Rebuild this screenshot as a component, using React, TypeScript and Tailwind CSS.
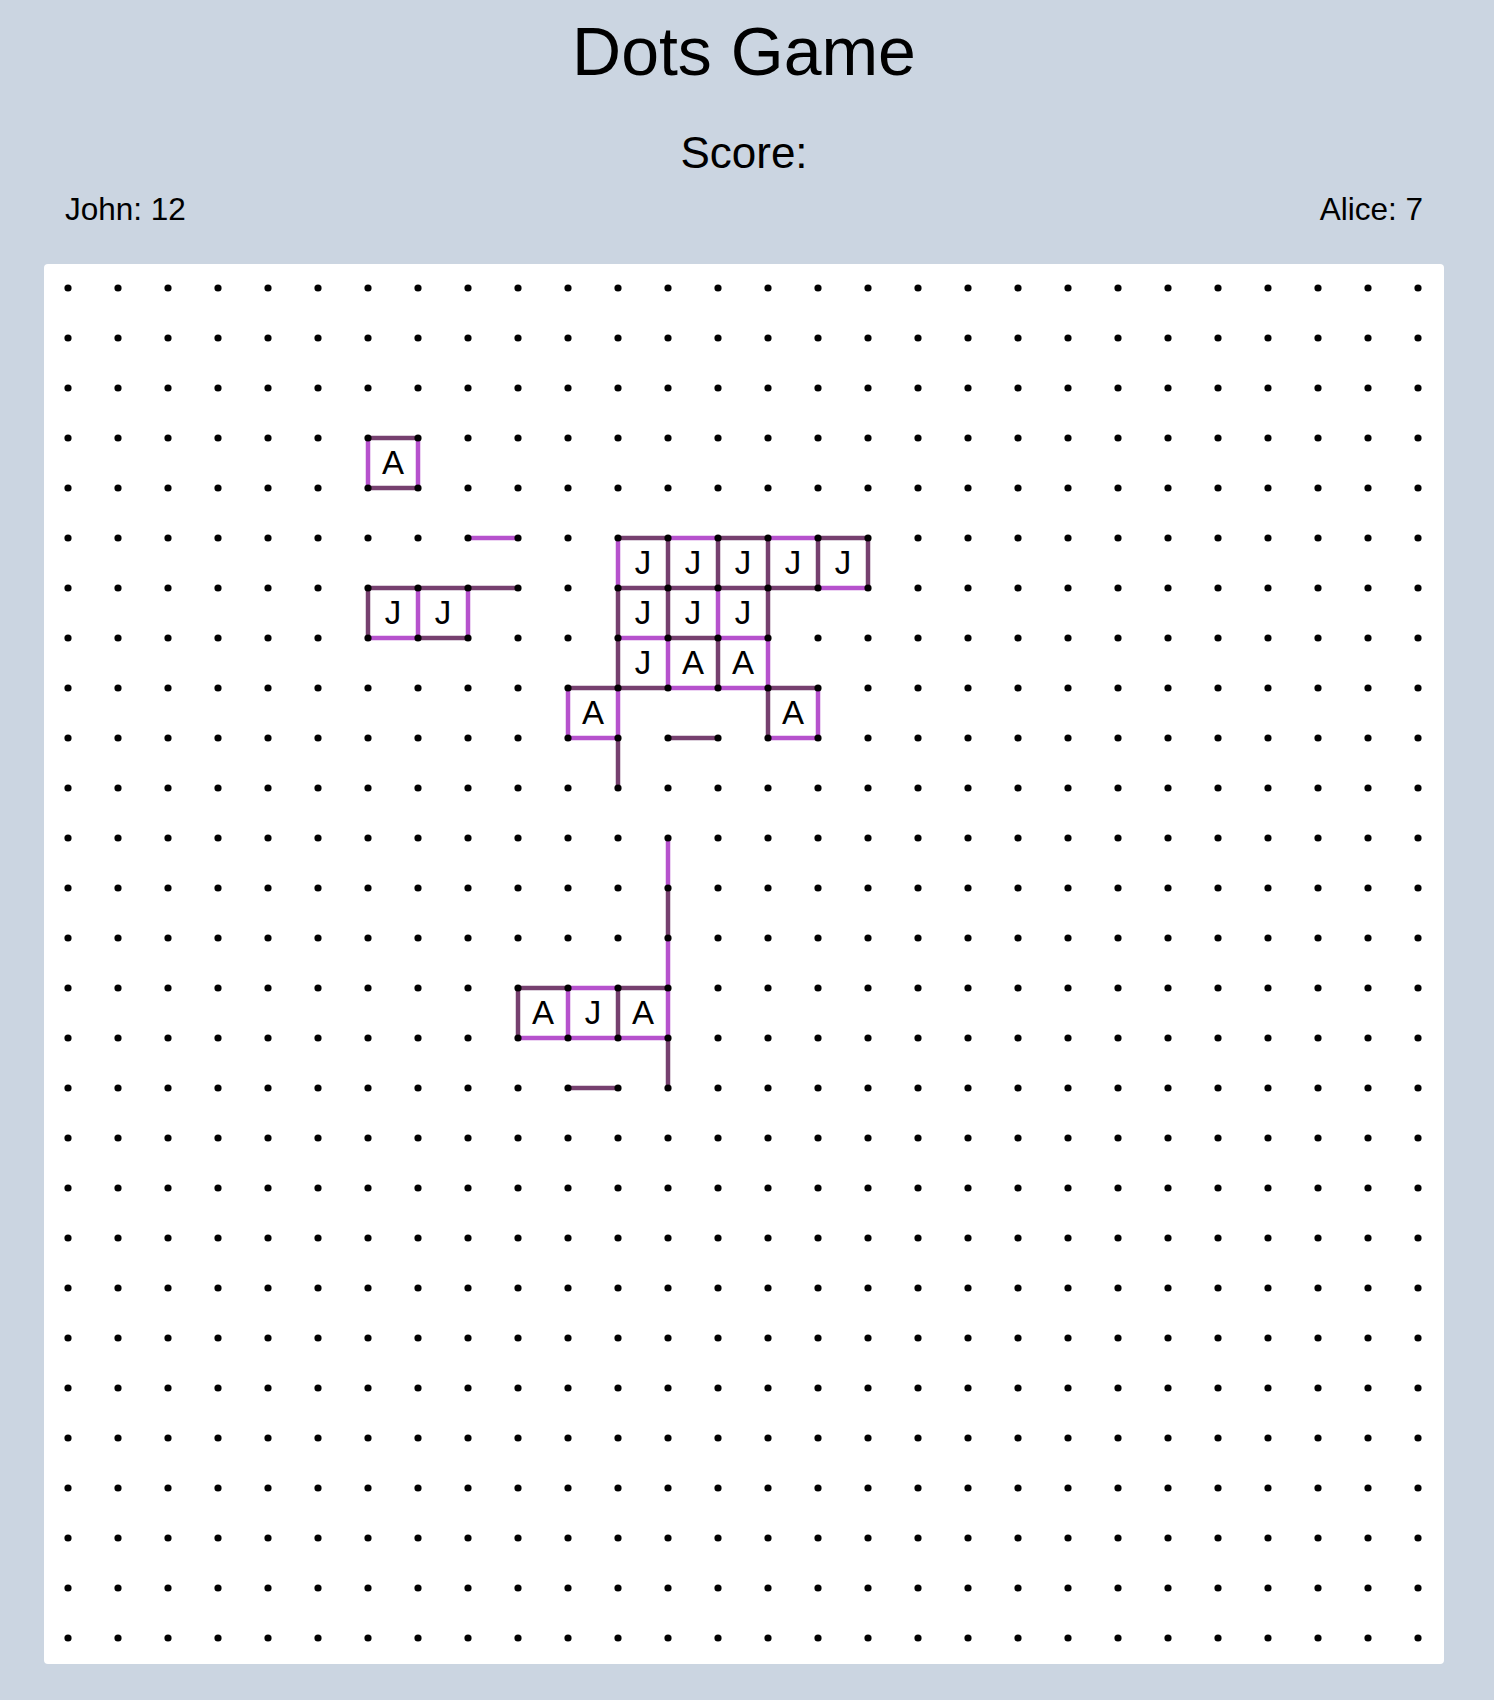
import React from "react";

const L = "#b652cd";
const D = "#76406f";

const ROWS = 28;
const COLS = 28;
const GAP = 50;
const OFF = 24;

type Seg = [number, number, "h" | "v", string];
type Box = [number, number, string];

// [row, col, dir, colour] -- h runs to col+1, v runs to row+1
const segments: Seg[] = [
  [3, 6, "h", D], [4, 6, "h", D], [3, 6, "v", L], [3, 7, "v", L],
  [5, 8, "h", L],
  [6, 6, "h", D], [6, 7, "h", D], [6, 8, "h", D],
  [6, 6, "v", D], [6, 7, "v", L], [6, 8, "v", L],
  [7, 6, "h", L], [7, 7, "h", D],
  [5, 11, "h", D], [5, 12, "h", L], [5, 13, "h", D], [5, 14, "h", L], [5, 15, "h", D],
  [5, 11, "v", L], [5, 12, "v", D], [5, 13, "v", D], [5, 14, "v", D], [5, 15, "v", D], [5, 16, "v", D],
  [6, 11, "h", D], [6, 12, "h", D], [6, 13, "h", D], [6, 14, "h", D], [6, 15, "h", L],
  [6, 11, "v", D], [6, 12, "v", D], [6, 13, "v", L], [6, 14, "v", D],
  [7, 11, "h", L], [7, 12, "h", D], [7, 13, "h", L],
  [7, 11, "v", D], [7, 12, "v", L], [7, 13, "v", D], [7, 14, "v", L],
  [8, 10, "h", D], [8, 11, "h", D], [8, 12, "h", L], [8, 13, "h", L], [8, 14, "h", D],
  [8, 10, "v", L], [8, 11, "v", L], [9, 10, "h", L],
  [8, 14, "v", D], [8, 15, "v", L], [9, 14, "h", L],
  [9, 12, "h", D],
  [9, 11, "v", D],
  [11, 12, "v", L], [12, 12, "v", D], [13, 12, "v", L], [14, 12, "v", L], [15, 12, "v", D],
  [14, 9, "h", D], [14, 10, "h", L], [14, 11, "h", D],
  [14, 9, "v", D], [14, 10, "v", L], [14, 11, "v", D],
  [15, 9, "h", L], [15, 10, "h", L], [15, 11, "h", L],
  [16, 10, "h", D],
];

const boxes: Box[] = [
  [3, 6, "A"],
  [6, 6, "J"], [6, 7, "J"],
  [5, 11, "J"], [5, 12, "J"], [5, 13, "J"], [5, 14, "J"], [5, 15, "J"],
  [6, 11, "J"], [6, 12, "J"], [6, 13, "J"],
  [7, 11, "J"], [7, 12, "A"], [7, 13, "A"],
  [8, 10, "A"], [8, 14, "A"],
  [14, 9, "A"], [14, 10, "J"], [14, 11, "A"],
];

const px = (i: number) => OFF + i * GAP;

function Board() {
  return (
    <svg width={1400} height={1400} className="block">
      {boxes.map(([r, c, letter]) => (
        <text
          key={`b${r}-${c}`}
          x={px(c) + GAP / 2}
          y={px(r) + 36}
          textAnchor="middle"
          fontSize={33}
          fontFamily="'Liberation Sans', Arial, sans-serif"
          fill="#000"
        >
          {letter}
        </text>
      ))}
      {segments.map(([r, c, dir, color], i) => (
        <line
          key={`s${i}`}
          x1={px(c)}
          y1={px(r)}
          x2={dir === "h" ? px(c + 1) : px(c)}
          y2={dir === "v" ? px(r + 1) : px(r)}
          stroke={color}
          strokeWidth={4.5}
        />
      ))}
      {Array.from({ length: ROWS }).map((_, r) =>
        Array.from({ length: COLS }).map((_, c) => (
          <circle key={`d${r}-${c}`} cx={px(c)} cy={px(r)} r={3.6} fill="#000" />
        ))
      )}
    </svg>
  );
}

export default function App() {
  return (
    <div className="min-h-[1700px] bg-[#cbd5e1] pl-[44px] font-['Liberation_Sans',Arial,sans-serif] text-black">
      <div className="flex w-[1400px] flex-col">
        <h1 className="mt-[17px] text-center text-[68px] leading-none">Dots Game</h1>
        <h2 className="mt-[46px] text-center text-[44px] leading-none">Score:</h2>
        <div className="mt-[19px] flex justify-between px-[21px] text-[31.5px] leading-none">
          <span>John: 12</span>
          <span>Alice: 7</span>
        </div>
        <div className="mt-[38px] overflow-hidden rounded bg-white">
          <Board />
        </div>
      </div>
    </div>
  );
}
